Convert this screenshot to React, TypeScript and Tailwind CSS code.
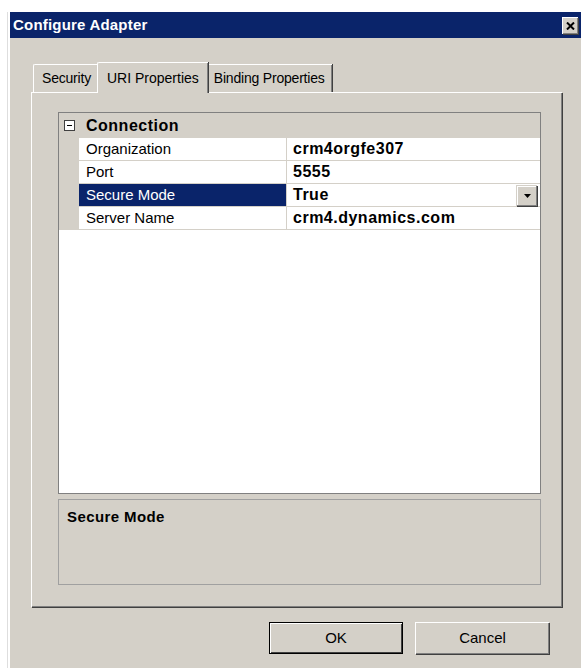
import React from "react";

type Prop = { name: string; value: string; selected?: boolean; dropdown?: boolean };

const props: Prop[] = [
  { name: "Organization", value: "crm4orgfe307" },
  { name: "Port", value: "5555" },
  { name: "Secure Mode", value: "True", selected: true, dropdown: true },
  { name: "Server Name", value: "crm4.dynamics.com" },
];

const font = "font-['Liberation_Sans',Arial,sans-serif]";

function CloseButton() {
  return (
    <div className="mr-[3px] flex h-[17px] w-[16px] items-center justify-center border-t border-l border-white bg-[#d4d0c8] shadow-[1px_1px_0_#404040,inset_-1px_-1px_0_#808080]">
      <svg width="9" height="8" viewBox="0 0 9 8">
        <path d="M1 0.5 L8 7.5 M8 0.5 L1 7.5" stroke="#000" strokeWidth="2" />
      </svg>
    </div>
  );
}

function Tab({ label, active, wide }: { label: string; active?: boolean; wide?: boolean }) {
  if (active) {
    return (
      <div className="relative z-10 -mx-[2px] -mb-[1px] flex h-[31px] items-center rounded-tl-[2px] border-t border-l border-white bg-[#d4d0c8] px-[9px] text-[14px] shadow-[1px_0_0_#404040,inset_-1px_0_0_#808080]">
        {label}
      </div>
    );
  }
  return (
    <div
      className={
        wide
          ? "flex h-[28px] items-center rounded-tl-[2px] border-t border-l border-white bg-[#d4d0c8] px-[8px] text-[14px] tracking-[-0.2px] shadow-[1px_0_0_#404040,inset_-1px_0_0_#808080]"
          : "flex h-[28px] items-center rounded-tl-[2px] border-t border-l border-white bg-[#d4d0c8] px-[7px] text-[14px] tracking-[-0.2px] shadow-[1px_0_0_#404040,inset_-1px_0_0_#808080]"
      }
    >
      {label}
    </div>
  );
}

function DropButton() {
  return (
    <div className="mr-[3px] flex h-[21px] w-[21px] items-center justify-center border-t border-l border-[#d4d0c8] bg-[#d4d0c8] shadow-[1px_1px_0_#404040,inset_-1px_-1px_0_#808080,inset_1px_1px_0_#fff]">
      <svg width="7" height="4" viewBox="0 0 7 4">
        <path d="M0 0 H7 L3.5 4 Z" fill="#000" />
      </svg>
    </div>
  );
}

function PropertyGrid() {
  return (
    <div className="flex h-[382px] flex-col border border-[#808080] bg-white">
      <div className="flex h-[25px] items-center bg-[#d4d0c8]">
        <div className="flex w-[20px] justify-center">
          <div className="flex h-[11px] w-[11px] items-center justify-center border border-[#404040] bg-white">
            <div className="h-[1px] w-[5px] bg-black" />
          </div>
        </div>
        <span className="pl-[7px] text-[16px] font-bold tracking-[0.5px]">Connection</span>
      </div>
      {props.map((p) => (
        <div key={p.name} className="flex h-[23px]">
          <div className="w-[20px] bg-[#d4d0c8]" />
          <div
            className={
              p.selected
                ? "flex w-[208px] items-center border-b border-r border-[#d4d0c8] bg-[#0a246a] pl-[7px] text-[15px] text-white"
                : "flex w-[208px] items-center border-b border-r border-[#d4d0c8] pl-[7px] text-[15px]"
            }
          >
            {p.name}
          </div>
          <div className="flex flex-1 items-center border-b border-[#d4d0c8] pl-[6px] text-[16px] font-bold tracking-[0.5px]">
            <span className="flex-1">{p.value}</span>
            {p.dropdown && <DropButton />}
          </div>
        </div>
      ))}
    </div>
  );
}

export default function App() {
  return (
    <div className={`h-[668px] w-[581px] overflow-hidden bg-white pl-[7px] pt-[12px] text-black ${font}`}>
      <div className="h-full border-l border-[#dedede] pl-[2px]">
        <div className="flex h-full flex-col">
          {/* caption bar */}
          <div className="flex h-[26px] items-center justify-between bg-[#0a246a] pl-[3px]">
            <span className="text-[15px] font-bold tracking-[0.2px] text-white">Configure Adapter</span>
            <CloseButton />
          </div>

          <div className="flex flex-1 flex-col bg-[#d4d0c8] pt-[24px]">
            {/* tab strip */}
            <div className="flex h-[30px] items-end pl-[23px]">
              <Tab label="Security" wide />
              <Tab label="URI Properties" active />
              <Tab label="Binding Properties" />
            </div>

            {/* tab page */}
            <div className="ml-[21px] h-[515px] w-[531px] border-t border-l border-white shadow-[1px_1px_0_#404040,inset_-1px_-1px_0_#808080]">
              <div className="flex h-full flex-col pl-[26px] pr-[21px] pt-[19px]">
                <PropertyGrid />
                <div className="mt-[5px] h-[86px] border border-[#a0a0a0] pl-[8px] pt-[5px]">
                  <span className="text-[15px] font-bold tracking-[0.4px]">Secure Mode</span>
                </div>
              </div>
            </div>

            {/* dialog buttons */}
            <div className="mt-[15px] flex justify-end gap-[12px] pr-[32px]">
              <button className="flex h-[32px] w-[134px] items-center justify-center border border-black bg-[#d4d0c8] text-[15px] shadow-[inset_1px_1px_0_#fff,inset_-1px_-1px_0_#404040]">
                OK
              </button>
              <button className="flex h-[32px] w-[134px] items-center justify-center border-t border-l border-white bg-[#d4d0c8] text-[15px] shadow-[1px_1px_0_#404040,inset_-1px_-1px_0_#808080]">
                Cancel
              </button>
            </div>
          </div>
        </div>
      </div>
    </div>
  );
}
